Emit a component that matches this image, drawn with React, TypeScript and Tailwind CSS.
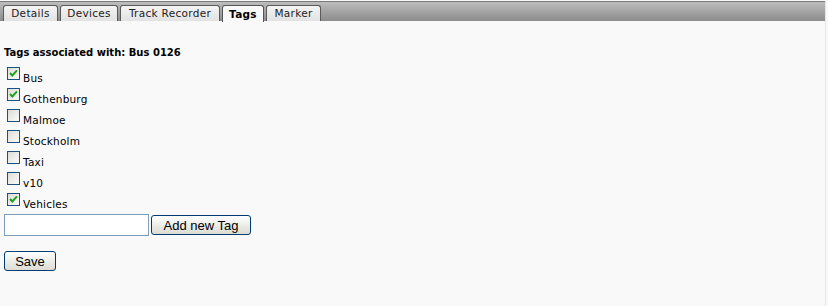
import React from "react";

const tags = [
  { name: "Bus", checked: true },
  { name: "Gothenburg", checked: true },
  { name: "Malmoe", checked: false },
  { name: "Stockholm", checked: false },
  { name: "Taxi", checked: false },
  { name: "v10", checked: false },
  { name: "Vehicles", checked: true },
];

const tabs = ["Details", "Devices", "Track Recorder", "Tags", "Marker"];
const tabWidths = [55, 58, 100, 42, 55];

function Check({ checked }: { checked: boolean }) {
  return (
    <span className="relative block w-[13px] h-[13px] border border-[#1c5180] bg-gradient-to-br from-[#dcdcd7] to-[#fbfbfa] shrink-0">
      {checked && (
        <svg width="11" height="11" viewBox="0 0 11 11" className="absolute left-0 top-0">
          <path d="M2 5 L4.3 7.5 L9 2.3" stroke="#21a121" strokeWidth="2" fill="none" />
        </svg>
      )}
    </span>
  );
}

export default function App() {
  return (
    <div className="w-[828px] h-[306px] bg-[#f9f9f9] overflow-hidden" style={{ fontFamily: '"DejaVu Sans", Verdana, sans-serif' }}>
      <div className="w-[826px] h-[306px] border-r border-[#e6e6e6]">
        <div className="mt-[1px] h-[20px] border-t border-[#7a7a7a] bg-gradient-to-b from-[#bdbdbd] to-[#8c8c8c] flex items-end pl-[3px] gap-[2px]">
          {tabs.map((t, i) => {
            const active = t === "Tags";
            return (
              <div
                key={t}
                style={{ width: tabWidths[i] }}
                className={
                  "h-[16px] rounded-t-[3px] border border-b-0 flex items-center justify-center text-[10.5px] tracking-[0.3px] leading-none " +
                  (active
                    ? "bg-[#f9f9f9] border-[#555] font-bold text-black h-[17px] -mb-[1px]"
                    : "bg-gradient-to-b from-[#f4f4f4] to-[#e2e2e2] border-[#5a5a5a] text-[#222]")
                }
              >
                {t}
              </div>
            );
          })}
        </div>
        <div className="pl-[4px]">
          <div className="mt-[26px] text-[10px] font-bold leading-[12px] text-black">Tags associated with: Bus 0126</div>
          <div className="mt-[8px]">
            {tags.map((t) => (
              <div key={t.name} className="flex h-[21px] pl-[3px]">
                <Check checked={t.checked} />
                <span className="ml-[3px] mt-[5px] text-[10.5px] tracking-[0.2px] leading-[12px] text-black">{t.name}</span>
              </div>
            ))}
          </div>
          <div className="flex items-center gap-[2px]">
            <input className="w-[145px] h-[22px] border border-[#7f9db9] bg-white outline-none" />
            <button
              className="w-[100px] h-[20px] rounded-[3px] border border-[#003c74] bg-gradient-to-b from-[#ffffff] to-[#dcdcd4] text-[13px] leading-none text-black"
              style={{ fontFamily: '"Liberation Sans", Arial, sans-serif' }}
            >
              Add new Tag
            </button>
          </div>
          <button
            className="mt-[15px] w-[52px] h-[20px] rounded-[3px] border border-[#003c74] bg-gradient-to-b from-[#ffffff] to-[#dcdcd4] text-[13px] leading-none text-black"
            style={{ fontFamily: '"Liberation Sans", Arial, sans-serif' }}
          >
            Save
          </button>
        </div>
      </div>
    </div>
  );
}
